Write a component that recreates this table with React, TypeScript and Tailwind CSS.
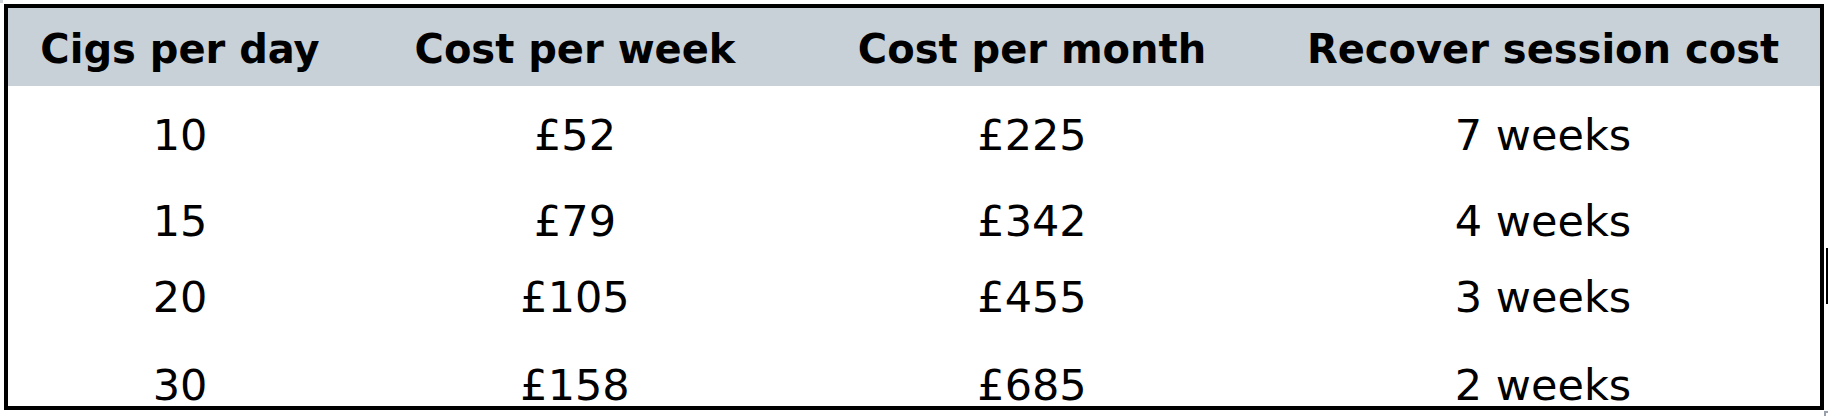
const rows = [
  { cigs: "10", week: "£52", month: "£225", recover: "7 weeks", h: "h-[86px]", pt: "pt-[28px]" },
  { cigs: "15", week: "£79", month: "£342", recover: "4 weeks", h: "h-[80px]", pt: "pt-[28px]" },
  { cigs: "20", week: "£105", month: "£455", recover: "3 weeks", h: "h-[76px]", pt: "pt-[24px]" },
  { cigs: "30", week: "£158", month: "£685", recover: "2 weeks", h: "h-[78px]", pt: "pt-[36px]" },
];

const headers = ["Cigs per day", "Cost per week", "Cost per month", "Recover session cost"];

const cols = "grid grid-cols-[344px_446px_468px_1fr]";

export default function App() {
  return (
    <div className="relative h-[416px] w-[1828px] bg-white font-['DejaVu_Sans',sans-serif] text-black">
      <span className="absolute left-0 top-0 h-[3px] w-[3px] bg-gray-300" />
      <div className="absolute left-[4px] top-[4px] flex h-[406px] w-[1820px] flex-col overflow-hidden border-4 border-black">
        <div className={`${cols} h-[78px] shrink-0 bg-[#c8d0d8]`}>
          {headers.map((h) => (
            <div
              key={h}
              className="whitespace-nowrap pt-[21px] text-center text-[40px] font-bold leading-[40px]"
            >
              {h}
            </div>
          ))}
        </div>
        {rows.map((r) => (
          <div key={r.cigs} className={`${cols} ${r.h} shrink-0`}>
            {[r.cigs, r.week, r.month, r.recover].map((v, i) => (
              <div
                key={i}
                className={`${r.pt} whitespace-nowrap text-center text-[43px] leading-[43px]`}
              >
                {v}
              </div>
            ))}
          </div>
        ))}
      </div>
      <span className="absolute left-[1826px] top-[248px] h-[56px] w-[2px] bg-black" />
      <span className="absolute left-[1824px] top-[411px] h-[5px] w-[4px] border-l-2 border-t-2 border-gray-400" />
    </div>
  );
}
